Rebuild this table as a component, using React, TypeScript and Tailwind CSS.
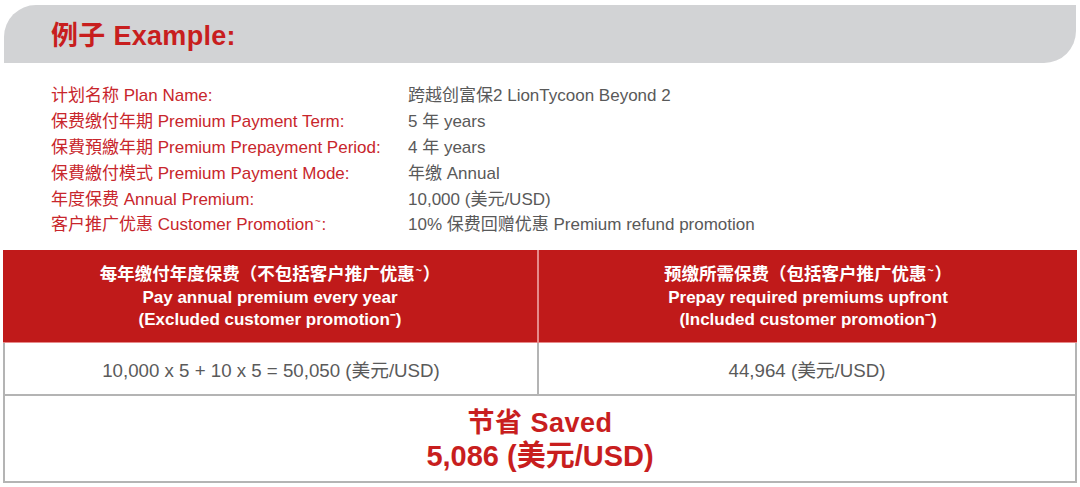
const font = '[font-family:"Liberation_Sans","Noto_Sans_CJK_SC",sans-serif]';

const Tilde = () => <span className="inline-block text-[0.6em] relative -top-[0.55em] mx-[1px]">~</span>;

const info: [React.ReactNode, string][] = [
  ['计划名称 Plan Name:', '跨越创富保2 LionTycoon Beyond 2'],
  ['保费缴付年期 Premium Payment Term:', '5 年 years'],
  ['保費預繳年期 Premium Prepayment Period:', '4 年 years'],
  ['保費繳付模式 Premium Payment Mode:', '年缴 Annual'],
  ['年度保费 Annual Premium:', '10,000 (美元/USD)'],
  [<>客户推广优惠 Customer Promotion<Tilde />:</>, '10% 保费回赠优惠 Premium refund promotion'],
];

export default function App() {
  return (
    <div className={`w-[1080px] h-[487px] bg-white overflow-hidden ${font}`}>
      {/* Title bar */}
      <div className="ml-[4px] mr-[4px] mt-[5px] h-[58px] bg-[#d2d3d5] rounded-tl-[32px] rounded-br-[32px] flex items-center pl-[47px]">
        <h1 className="text-[27px] font-bold text-[#c81e1e] tracking-[0.3px] mt-[4px]">例子 Example:</h1>
      </div>

      {/* Plan info */}
      <div className="mt-[20px] ml-[51px] flex flex-col">
        {info.map(([label, value], i) => (
          <div key={i} className="flex h-[25.8px] items-center text-[17px] leading-none">
            <span className="w-[357px] text-[#c8262c]">{label}</span>
            <span className="text-[#595959]">{value}</span>
          </div>
        ))}
      </div>

      {/* Comparison table */}
      <div className="mt-[12px] ml-[3px] w-[1074px] border-x-2 border-b-2 border-[#b4b4b4]">
        <div className="grid grid-cols-[536px_1fr] bg-[#c01a1a] h-[93px] -mx-[2px] border-b border-[#e88a8a]">
          <div className="flex flex-col items-center justify-center text-white font-bold text-[17px] leading-[22px] border-r-2 border-[#e58a8a] pt-[2px]">
            <span className="text-[17.5px]">每年缴付年度保费（不包括客户推广优惠<Tilde />）</span>
            <span>Pay annual premium every year</span>
            <span>(Excluded customer promotion⁻)</span>
          </div>
          <div className="flex flex-col items-center justify-center text-white font-bold text-[17px] leading-[22px] pt-[2px]">
            <span className="text-[17.5px]">预缴所需保费（包括客户推广优惠<Tilde />）</span>
            <span>Prepay required premiums upfront</span>
            <span>(Included customer promotion⁻)</span>
          </div>
        </div>
        <div className="grid grid-cols-[534px_1fr] h-[53px] border-b-2 border-[#b4b4b4] text-[18.7px] text-[#5a5a5a]">
          <div className="flex items-center justify-center border-r-2 border-[#b4b4b4] pt-[6px]">10,000 x 5 + 10 x 5 = 50,050 (美元/USD)</div>
          <div className="flex items-center justify-center pt-[6px]">44,964 (美元/USD)</div>
        </div>
        <div className="h-[85px] flex flex-col items-center justify-center text-[#c81e1e] font-bold pt-[4px]">
          <span className="text-[27px] leading-[33px] tracking-[0.5px]">节省 Saved</span>
          <span className="text-[29px] leading-[33px]">5,086 (美元/USD)</span>
        </div>
      </div>
    </div>
  );
}
